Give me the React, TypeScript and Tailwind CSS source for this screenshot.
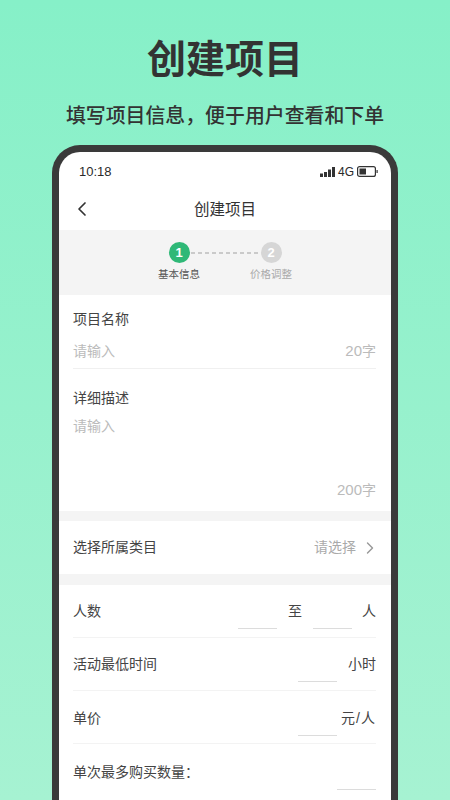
import React from 'react';
import { ChevronLeft, ChevronRight } from 'lucide-react';

const font = "font-['Liberation_Sans','Noto_Sans_CJK_SC',sans-serif]";

const NumRow: React.FC<{ label: string; unit: string; labelTop: string; lineTop: string; unitClass?: string }> = ({ label, unit, labelTop, lineTop, unitClass }) => (
  <div className="flex h-[53px] shrink-0 items-start border-b border-[#f3f3f3] text-[14px] leading-[20px] text-[#444]">
    <span className={`flex-1 ${labelTop}`}>{label}</span>
    <span className={`h-[1px] w-[39px] bg-[#dcdcdc] ${lineTop}`} />
    <span className={`ml-[11px] flex w-[28px] justify-end whitespace-nowrap ${labelTop} ${unitClass ?? ''}`}>{unit}</span>
  </div>
);

export default function App() {
  return (
    <div className={`${font} flex h-[800px] w-[450px] flex-col items-center overflow-hidden bg-gradient-to-b from-[#86f0c8] to-[#a6f2d2]`}>
      <h1 className="mt-[36px] text-[39px] font-bold leading-[48px] tracking-[0px] text-[#333]">创建项目</h1>
      <p className="mt-[18px] text-[19.9px] font-medium leading-[28px] text-[#333]">填写项目信息，便于用户查看和下单</p>

      <div className="mt-[15px] w-[346px] flex-1 overflow-hidden rounded-t-[28px] border-x-[7px] border-t-[7px] border-[#3a3a3a] bg-white">
        {/* status bar */}
        <div className="flex h-[38px] items-center justify-between pl-[20px] pr-[13px] pt-[1px] text-[#2a2a2a]">
          <span className="text-[13px]">10:18</span>
          <div className="flex items-center gap-[3px]">
            <svg width="15" height="10" viewBox="0 0 15 10" fill="#333">
              <rect x="0" y="6.5" width="3" height="3.5" />
              <rect x="4" y="5" width="3" height="5" />
              <rect x="8" y="2.5" width="3" height="7.5" />
              <rect x="12" y="0" width="3" height="10" />
            </svg>
            <span className="text-[12px]">4G</span>
            <svg width="21" height="11" viewBox="0 0 21 11">
              <rect x="0.6" y="0.6" width="17.8" height="9.8" rx="2" fill="none" stroke="#333" strokeWidth="1.2" />
              <rect x="2.5" y="2.5" width="6.5" height="6" fill="#333" />
              <rect x="19.5" y="4" width="1.2" height="3" fill="#333" />
            </svg>
          </div>
        </div>

        {/* nav */}
        <div className="relative flex h-[40px] items-center justify-center pb-[1px] text-[15.5px] text-[#333]">
          <ChevronLeft size={24} strokeWidth={1.7} className="absolute left-[11px] top-[7px] text-[#333]" />
          创建项目
        </div>

        {/* stepper */}
        <div className="flex h-[65px] flex-col items-center bg-[#f4f4f4] pt-[12px]">
          <div className="flex items-center">
            <div className="flex h-[21px] w-[21px] items-center justify-center rounded-full bg-[#2fb877] text-[13px] font-bold text-white">1</div>
            <svg width="71" height="2" viewBox="0 0 71 2">
              <line x1="1" y1="1" x2="71" y2="1" stroke="#bcbcbc" strokeWidth="1.4" strokeDasharray="4 3" />
            </svg>
            <div className="flex h-[21px] w-[21px] items-center justify-center rounded-full bg-[#d6d6d6] text-[13px] font-bold text-white">2</div>
          </div>
          <div className="mt-[4px] flex w-[134px] justify-between text-[10.5px] leading-[15px]">
            <span className="text-[#555]">基本信息</span>
            <span className="text-[#aaa]">价格调整</span>
          </div>
        </div>

        {/* name + description */}
        <div className="pl-[14px] pr-[15px]">
          <div className="pt-[14px] text-[14px] leading-[20px] text-[#444]">项目名称</div>
          <div className="mt-[12px] flex items-center justify-between border-b border-[#f0f0f0] pb-[7px] text-[14px] leading-[20px] text-[#bbb]">
            <span>请输入</span>
            <span><span className="text-[15px]">20</span>字</span>
          </div>
          <div className="mt-[19px] text-[14px] leading-[20px] text-[#444]">详细描述</div>
          <div className="mt-[8px] text-[14px] leading-[20px] text-[#bbb]">请输入</div>
          <div className="mt-[44px] pb-[11px] text-right text-[14px] leading-[20px] text-[#bbb]"><span className="text-[15px]">200</span>字</div>
        </div>

        <div className="h-[10px] bg-[#f4f4f4]" />

        <div className="flex h-[53px] items-center justify-between pl-[14px] pr-[15px] text-[14px] text-[#444]">
          <span>选择所属类目</span>
          <span className="flex items-center text-[#aaa]">
            请选择
            <ChevronRight size={20} strokeWidth={1.7} className="ml-[4px] mr-[-4px] text-[#999]" />
          </span>
        </div>

        <div className="h-[11px] bg-[#f4f4f4]" />

        <div className="flex flex-col pl-[14px] pr-[15px]">
          <div className="flex h-[53px] shrink-0 items-start border-b border-[#f3f3f3] pt-[16px] text-[14px] leading-[20px] text-[#444]">
            <span className="flex-1">人数</span>
            <span className="mt-[27px] h-[1px] w-[39px] bg-[#dcdcdc]" />
            <span className="mx-[11px]">至</span>
            <span className="mt-[27px] h-[1px] w-[39px] bg-[#dcdcdc]" />
            <span className="ml-[10px]">人</span>
          </div>
          <NumRow label="活动最低时间" unit="小时" labelTop="mt-[16px]" lineTop="mt-[43px]" />
          <NumRow label="单价" unit="元/人" labelTop="mt-[17px]" lineTop="mt-[44px]" unitClass="tracking-[1px]" />
          <div className="flex h-[53px] shrink-0 items-start pt-[18px] text-[14px] leading-[20px] text-[#444]">
            <span className="flex-1">单次最多购买数量：</span>
            <span className="mt-[27px] h-[1px] w-[39px] bg-[#dcdcdc]" />
          </div>
        </div>
      </div>
    </div>
  );
}
